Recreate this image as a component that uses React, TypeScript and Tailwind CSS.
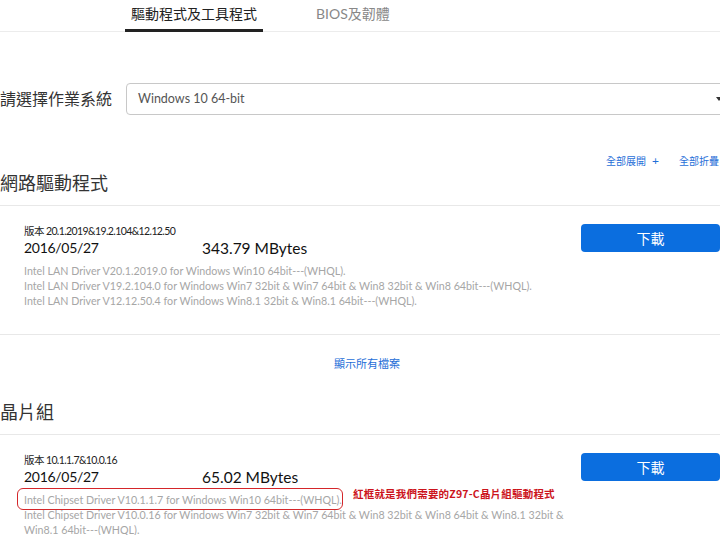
import React from "react";

const FONT = { fontFamily: '"Lato", "Noto Sans CJK TC", sans-serif' };

function Card({
  version,
  date,
  size,
  lines,
  highlight,
}: {
  version: string;
  date: string;
  size: string;
  lines: string[];
  highlight?: boolean;
}) {
  return (
    <div className="flex pt-[18px] pb-[26px] border-b border-[#e8e8e8]">
      <div className="flex-1 pl-[24px] pr-[12px]">
        <div className="text-[10.5px] leading-[14px] tracking-[-0.6px] text-[#222]">{version}</div>
        <div className="flex leading-[18px] text-[#111] mt-[1px]">
          <div className="w-[178px] text-[14px] tracking-[-0.3px]">{date}</div>
          <div className="text-[15.5px]">{size}</div>
        </div>
        <div className="mt-[6px] text-[10.7px] leading-[15px] text-[#a6a6a6]">
          {lines.map((l, i) => (
            <div key={i} className={i === 0 && highlight ? "relative" : ""}>
              {l}
              {i === 0 && highlight && (
                <>
                  <span className="absolute left-[-7px] top-[-4px] w-[326px] h-[22px] border-[1.5px] border-[#d4262a] rounded-[6px]" />
                  <span
                    className="absolute left-[329px] top-[-6px] whitespace-nowrap text-[10.5px] font-bold text-[#cc141c] tracking-[0.2px]"
                    style={{ fontFamily: '"Noto Sans CJK TC", serif' }}
                  >
                    紅框就是我們需要的Z97-C晶片組驅動程式
                  </span>
                </>
              )}
            </div>
          ))}
        </div>
      </div>
      <div className="w-[139px] shrink-0">
        <button className="w-full h-[28px] rounded-[4px] bg-[#0b6edf] text-white text-[14px]">下載</button>
      </div>
    </div>
  );
}

export default function App() {
  return (
    <div className="w-[720px] h-[535px] overflow-hidden bg-white" style={FONT}>
      <div className="flex h-[32px] border-b border-[#ececec] pl-[125px] text-[14px]">
        <div className="h-[32px] px-[6px] pt-[5px] border-b-[3px] border-[#222] text-[#222] leading-[18px]">
          驅動程式及工具程式
        </div>
        <div className="h-[32px] ml-[53px] pt-[5px] text-[#888] leading-[18px]">BIOS及韌體</div>
      </div>

      <div className="flex items-center mt-[51px] h-[32px]">
        <div className="w-[126px] text-[16px] text-[#333]">請選擇作業系統</div>
        <div className="relative flex-1 -mr-[14px] h-[32px] border border-[#c8c8c8] rounded-[4px] flex items-center pl-[11px] text-[12.5px] text-[#555]">
          Windows 10 64-bit
          <span className="absolute right-[11px] top-[13px] w-0 h-0 border-l-[3px] border-r-[3px] border-t-[4px] border-l-transparent border-r-transparent border-t-[#333]" />
        </div>
      </div>

      <div className="flex justify-end mt-[40px] h-[12px] pr-[1px] text-[10px] leading-[12px] text-[#1f6fd8]">
        <span>全部展開</span>
        <span className="ml-[6px] text-[12px] leading-[12px]">+</span>
        <span className="ml-[20px] whitespace-nowrap">全部折疊</span>
      </div>

      <div className="mt-[4px] pb-[10px] border-b border-[#e8e8e8] text-[18px] leading-[24px] text-[#333]">
        網路驅動程式
      </div>

      <Card
        version="版本 20.1.2019&19.2.104&12.12.50"
        date="2016/05/27"
        size="343.79 MBytes"
        lines={[
          "Intel LAN Driver V20.1.2019.0 for Windows Win10 64bit---(WHQL).",
          "Intel LAN Driver V19.2.104.0 for Windows Win7 32bit & Win7 64bit & Win8 32bit & Win8 64bit---(WHQL).",
          "Intel LAN Driver V12.12.50.4 for Windows Win8.1 32bit & Win8.1 64bit---(WHQL).",
        ]}
      />

      <div className="mt-[22px] flex justify-center text-[11px] leading-[14px] text-[#1f6fd8] pl-[14px]">顯示所有檔案</div>

      <div className="mt-[29px] pb-[10px] border-b border-[#e8e8e8] text-[18px] leading-[24px] text-[#333]">晶片組</div>

      <Card
        version="版本 10.1.1.7&10.0.16"
        date="2016/05/27"
        size="65.02 MBytes"
        highlight
        lines={[
          "Intel Chipset Driver V10.1.1.7 for Windows Win10 64bit---(WHQL).",
          "Intel Chipset Driver V10.0.16 for Windows Win7 32bit & Win7 64bit & Win8 32bit & Win8 64bit & Win8.1 32bit & Win8.1 64bit---(WHQL).",
        ]}
      />
    </div>
  );
}
